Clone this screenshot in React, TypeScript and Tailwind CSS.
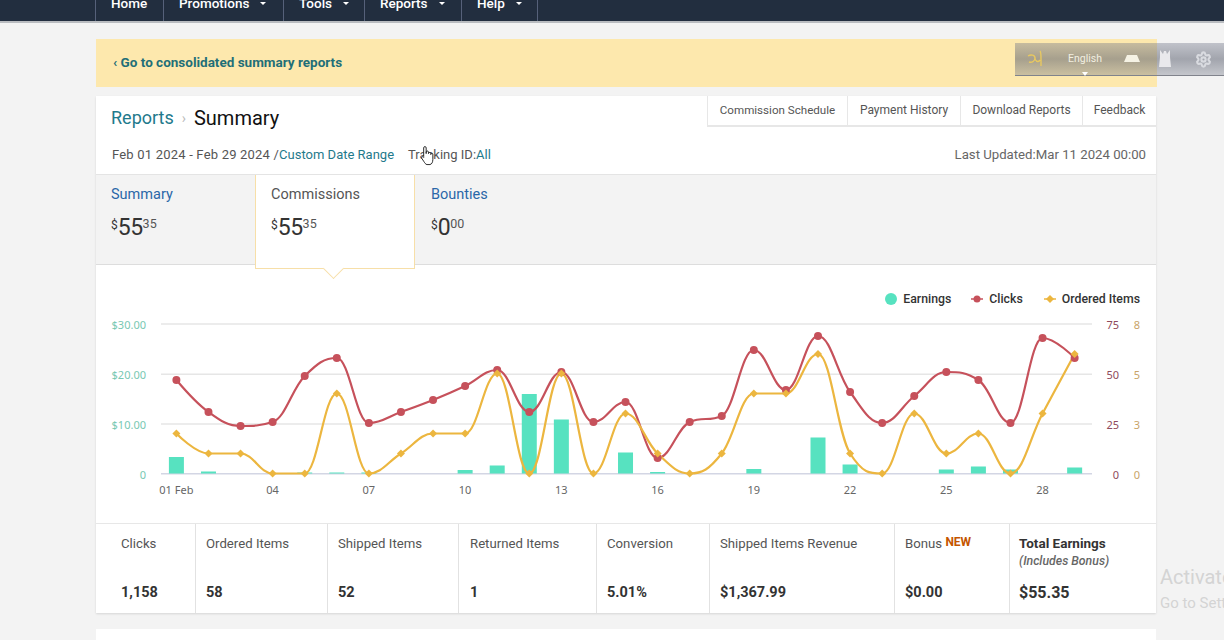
import React from "react";
import { Settings } from "lucide-react";

const clicks = [380, 412, 426, 422, 376, 358, 423, 412, 400, 386, 370, 412, 372, 422, 402, 458, 422, 416, 350, 390, 336, 392, 423, 396, 372, 380, 423, 338, 358];
const ordered = [433.5, 453.5, 453.5, 473.5, 473.5, 393.5, 473.5, 453.5, 433.5, 433.5, 373.5, 473.5, 373.5, 473.5, 413.5, 453.5, 473.5, 453.5, 393.5, 393.5, 354, 453.5, 473.5, 413.5, 453.5, 433.5, 473.5, 413.5, 354];
const bars: [number, number][] = [[0, 16.5], [1, 2], [4, 1], [5, 1], [6, 1], [9, 3.5], [10, 8], [11, 79.5], [12, 54], [14, 21], [15, 1.5], [18, 4.5], [20, 36], [21, 9], [24, 4], [25, 7], [26, 4], [28, 6]];

const dayX = (i: number) => 176.4 + 32.08 * i;

// highcharts style spline
function control(pts: number[][], i: number) {
    const [x, y] = pts[i];
    const last = pts[i - 1];
    const next = pts[i + 1];
    if (!last || !next) return { lx: x, ly: y, rx: x, ry: y };
    const lx = (1.5 * x + last[0]) / 2.5;
    let ly = (1.5 * y + last[1]) / 2.5;
    const rx = (1.5 * x + next[0]) / 2.5;
    let ry = (1.5 * y + next[1]) / 2.5;
    const fix = ((ry - ly) * (rx - x)) / (rx - lx) + y - ry;
    ly += fix;
    ry += fix;
    if (ly > last[1] && ly > y) {
        ly = Math.max(last[1], y);
        ry = 2 * y - ly;
    } else if (ly < last[1] && ly < y) {
        ly = Math.min(last[1], y);
        ry = 2 * y - ly;
    }
    if (ry > next[1] && ry > y) {
        ry = Math.max(next[1], y);
        ly = 2 * y - ry;
    } else if (ry < next[1] && ry < y) {
        ry = Math.min(next[1], y);
        ly = 2 * y - ry;
    }
    return { lx, ly, rx, ry };
}

function splinePath(values: number[]) {
    const pts = values.map((y, i) => [dayX(i), y]);
    let d = `M${pts[0][0]} ${pts[0][1]}`;
    for (let i = 1; i < pts.length; i++) {
        const a = control(pts, i - 1);
        const b = control(pts, i);
        d += ` C${a.rx} ${a.ry} ${b.lx} ${b.ly} ${pts[i][0]} ${pts[i][1]}`;
    }
    return d;
}

function Money({ whole, cents }: { whole: string; cents: string }) {
    return (
        <div className="mt-[10px] flex items-start text-[#333]">
            <span className="mt-[3px] text-[12px] leading-[14px]">$</span>
            <span className="text-[23px] leading-[26px] tracking-[-0.5px]">{whole}</span>
            <span className="mt-[2px] text-[12.5px] leading-[14px] text-[#555]">{cents}</span>
        </div>
    );
}

function Chart() {
    const gridY = [324, 374.3, 424];
    const left = ["$30.00", "$20.00", "$10.00", "0"];
    const ticks = [324, 374.3, 424, 473.7];
    const xLabels = ["01 Feb", "04", "07", "10", "13", "16", "19", "22", "25", "28"];
    return (
        <svg viewBox="96 312 1060 211" className="block h-[211px] w-[1060px]">
            {gridY.map((y) => (
                <line key={y} x1="161" x2="1092" y1={y} y2={y} stroke="#e6e6e6" strokeWidth="1.6" />
            ))}
            <line x1="161" x2="1092" y1="473.7" y2="473.7" stroke="#d3d6e4" strokeWidth="1.4" />
            {bars.map(([i, h]) => (
                <rect key={i} x={dayX(i) - 7.5} y={473.5 - h} width="15" height={h} fill="#57e2c0" />
            ))}
            <path d={splinePath(clicks)} fill="none" stroke="#c6515b" strokeWidth="2.2" />
            <path d={splinePath(ordered)} fill="none" stroke="#ecb63f" strokeWidth="2.2" />
            {clicks.map((y, i) => (
                <circle key={i} cx={dayX(i)} cy={y} r="4" fill="#c6515b" />
            ))}
            {ordered.map((y, i) => (
                <path key={i} d={`M${dayX(i)} ${y - 4}l4 4l-4 4l-4 -4z`} fill="#ecb63f" />
            ))}
            <g fontSize="11" fontFamily="'Noto Sans', sans-serif">
                {left.map((t, i) => (
                    <text key={t} x="146" y={[329, 379, 429, 479][i]} textAnchor="end" fill="#78c8b2">{t}</text>
                ))}
                {ticks.map((y, i) => (
                    <text key={y} x="1119" y={y + 5} textAnchor="end" fill="#8f4a5c">{["75", "50", "25", "0"][i]}</text>
                ))}
                {ticks.map((y, i) => (
                    <text key={y} x="1140" y={y + 5} textAnchor="end" fill="#c9a468">{["8", "5", "3", "0"][i]}</text>
                ))}
                {xLabels.map((t, i) => (
                    <text key={t} x={dayX(i * 3)} y="494" textAnchor="middle" fill="#666">{t}</text>
                ))}
            </g>
        </svg>
    );
}

const stats = [
    { label: "Clicks", value: "1,158", cls: "w-[100px] pl-[25px]" },
    { label: "Ordered Items", value: "58", cls: "w-[132px] pl-[10px]" },
    { label: "Shipped Items", value: "52", cls: "w-[131px] pl-[10px]" },
    { label: "Returned Items", value: "1", cls: "w-[138px] pl-[11px]" },
    { label: "Conversion", value: "5.01%", cls: "w-[113px] pl-[10px]" },
    { label: "Shipped Items Revenue", value: "$1,367.99", cls: "w-[185px] pl-[10px]" },
];

const nav = [
    { label: "Home", cls: "w-[68px]", caret: false },
    { label: "Promotions", cls: "w-[120px]", caret: true },
    { label: "Tools", cls: "w-[81px]", caret: true },
    { label: "Reports", cls: "w-[97px]", caret: true },
    { label: "Help", cls: "w-[76px]", caret: true },
];

export default function App() {
    return (
        <div className="relative h-[640px] w-[1224px] overflow-hidden bg-[#f3f3f3] font-['Roboto',sans-serif] text-[#444]">
            <header className="flex h-[23px] items-end overflow-hidden border-b-2 border-[#b9bcc0] bg-[#222e3f] pl-[95px]">
                <div className="flex border-r border-[#56617a]">
                    {nav.map((n) => (
                        <div key={n.label} className={`${n.cls} flex h-[36px] items-center border-l border-[#56617a] pl-[15px] text-[13.5px] font-medium text-white`}>
                            {n.label}
                            {n.caret && <span className="ml-[11px] h-0 w-0 border-x-[3px] border-t-[3px] border-x-transparent border-t-white" />}
                        </div>
                    ))}
                </div>
            </header>

            <main className="ml-[96px] w-[1060px] pt-[16px]">
                <div className="flex h-[48px] w-[1061px] items-center bg-[#fde8ad] pb-[1px] pl-[17px] text-[13.5px] font-bold text-[#1f6f78]">
                    ‹ Go to consolidated summary reports
                </div>

                <section className="mt-[9px] bg-white shadow-[0_1px_2px_rgba(0,0,0,0.12)]">
                    <div className="relative h-[79px] border-b border-[#e4e4e4]">
                        <div className="flex items-start justify-between">
                            <div className="flex items-center pl-[15px] pt-[8px] text-[20px] leading-[28px]">
                                <span className="text-[18px] text-[#1f7a8c]">Reports</span>
                                <span className="mx-[8px] text-[14px] text-[#bbb]">›</span>
                                <span className="text-[#111]">Summary</span>
                            </div>
                            <div className="flex h-[31px] items-center border-b-2 border-l border-[#e7e7e7] text-[12px] text-[#555]">
                                <span className="w-[140px] border-r border-[#e7e7e7] text-center text-[11.6px] leading-[29px]">Commission Schedule</span>
                                <span className="w-[113px] border-r border-[#e7e7e7] text-center leading-[29px]">Payment History</span>
                                <span className="w-[122px] border-r border-[#e7e7e7] text-center leading-[29px]">Download Reports</span>
                                <span className="w-[73px] text-center leading-[29px]">Feedback</span>
                            </div>
                        </div>
                        <div className="mt-[13px] flex items-center justify-between pl-[16px] pr-[10px] text-[13px] leading-[20px]">
                            <div className="flex">
                                <span className="tracking-[0.2px] text-[#555]">Feb 01 2024 - Feb 29 2024 /</span>
                                <span className="text-[#1f7a8c]">Custom Date Range</span>
                                <span className="ml-[14px] text-[#555]">Tracking ID:</span>
                                <span className="text-[#1f7a8c]">All</span>
                            </div>
                            <span className="text-[13.2px] text-[#666]">Last Updated:Mar 11 2024 00:00</span>
                        </div>
                    </div>

                    <div className="flex h-[90px] border-b border-[#dddddd] bg-[#f3f3f3] text-[14.5px]">
                        <div className="w-[159px] pl-[15px] pt-[10px]">
                            <div className="leading-[20px] text-[#2a67a8]">Summary</div>
                            <Money whole="55" cents="35" />
                        </div>
                        <div className="relative z-10 h-[94px] w-[160px] border-x border-b border-[#f7dfa8] bg-white pl-[15px] pt-[10px]">
                            <div className="leading-[20px] text-[#555]">Commissions</div>
                            <Money whole="55" cents="35" />
                            <span className="absolute bottom-[-8px] left-[70px] h-[15px] w-[15px] rotate-45 border-b border-r border-[#f7dfa8] bg-white" />
                        </div>
                        <div className="pl-[16px] pt-[10px]">
                            <div className="leading-[20px] text-[#2a67a8]">Bounties</div>
                            <Money whole="0" cents="00" />
                        </div>
                    </div>

                    <div className="h-[258px]">
                        <div className="flex h-[47px] items-center justify-end pb-[6px] pr-[16px] pt-[26px] text-[12.3px] font-medium leading-[16px] text-[#333]">
                            <span className="mr-[6px] h-[12px] w-[12px] rounded-full bg-[#57e2c0]" />
                            <span>Earnings</span>
                            <svg width="12" height="8" className="ml-[20px] mr-[6px]"><path d="M0 4h12" stroke="#c6515b" strokeWidth="1.5" /><circle cx="6" cy="4" r="3.5" fill="#c6515b" /></svg>
                            <span>Clicks</span>
                            <svg width="12" height="8" className="ml-[21px] mr-[6px]"><path d="M0 4h12" stroke="#ecb63f" strokeWidth="1.5" /><path d="M6 0l4 4l-4 4l-4 -4z" fill="#ecb63f" /></svg>
                            <span>Ordered Items</span>
                        </div>
                        <Chart />
                    </div>

                    <div className="flex h-[90px] border-t border-[#e7e7e7] text-[13.2px]">
                        {stats.map((s) => (
                            <div key={s.label} className={`${s.cls} flex flex-col justify-between border-r border-[#e2e2e2] pb-[11px] pt-[11px]`}>
                                <span className="leading-[18px] text-[#555]">{s.label}</span>
                                <span className="text-[14.5px] font-bold leading-[18px] text-[#333]">{s.value}</span>
                            </div>
                        ))}
                        <div className="flex w-[115px] flex-col justify-between border-r border-[#e2e2e2] pb-[11px] pl-[10px] pt-[11px]">
                            <span className="leading-[18px] text-[#555]">
                                Bonus <span className="relative top-[-2px] text-[12px] font-bold text-[#c45500]">NEW</span>
                            </span>
                            <span className="text-[14.5px] font-bold leading-[18px] text-[#333]">$0.00</span>
                        </div>
                        <div className="flex w-[146px] flex-col pb-[11px] pl-[9px] pt-[10px]">
                            <span className="text-[13.5px] font-bold leading-[18px] text-[#333]">Total Earnings</span>
                            <span className="text-[12.3px] font-medium italic leading-[18px] text-[#666]">(Includes Bonus)</span>
                            <span className="mt-auto text-[16px] font-bold leading-[18px] text-[#333]">$55.35</span>
                        </div>
                    </div>
                </section>

                <section className="mt-[16px] h-[40px] bg-white" />
            </main>

            {/* floating language bar */}
            <div className="absolute left-[1015px] top-[43px] flex h-[33px] w-[209px] items-center border-b border-[#80838c] bg-[linear-gradient(180deg,rgba(110,115,135,0.38),rgba(95,100,115,0.55)_50%,rgba(120,125,140,0.38))]">
                <svg width="16" height="18" viewBox="0 0 16 18" className="ml-[12px]" fill="none" stroke="#e8c860" strokeWidth="1.4">
                    <path d="M1 6c3-2 7-1 7 2c0 3-3 5-6 4M8 8c0 3 3 5 5 2M13 1c1 1 1 3 1 8v7" />
                </svg>
                <div className="relative ml-[24px] w-[36px] text-center text-[10.5px] leading-[14px] text-[#f2efe0]">
                    English
                    <span className="absolute left-[15px] top-[20px] h-0 w-0 border-x-[3px] border-t-[4px] border-x-transparent border-t-white" />
                </div>
                <svg width="16" height="8" viewBox="0 0 16 8" className="ml-[21px]"><path d="M3 0h10l3 7H0z" fill="#f5f2e4" /></svg>
                <svg width="12" height="18" viewBox="0 0 12 18" className="ml-[19px]"><path d="M1 0l3 4l1-3h2l1 3l3-4v7l1 10H0L1 7z" fill="#e9e9ec" /></svg>
                <Settings size={17} strokeWidth={3} className="ml-[24px] text-[#d9dbe0]" />
            </div>

            {/* mouse pointer */}
            <svg width="15" height="21" viewBox="0 0 14 22" className="absolute left-[420px] top-[145px]" fill="#fff" stroke="#222" strokeWidth="1" strokeLinejoin="round">
                <path d="M3 12V3a1.3 1.3 0 0 1 2.6 0v6V7.5a1.2 1.2 0 0 1 2.4 0V9a1.2 1.2 0 0 1 2.4 0v1a1.1 1.1 0 0 1 2.2 0v5c0 3-1 5-3 5.500H6.500c-1.500 0-2.500-2-3.500-3.500L1 14c-.8-1.500 1-2.500 2-1z" />
            </svg>

            {/* windows watermark */}
            <div className="absolute left-[1160px] top-[564px] whitespace-nowrap text-[#d4d4d4]">
                <div className="text-[20px] leading-[26px]">Activate Windows</div>
                <div className="mt-[1px] text-[15px] leading-[24px]">Go to Settings to activate Windows.</div>
            </div>
        </div>
    );
}
